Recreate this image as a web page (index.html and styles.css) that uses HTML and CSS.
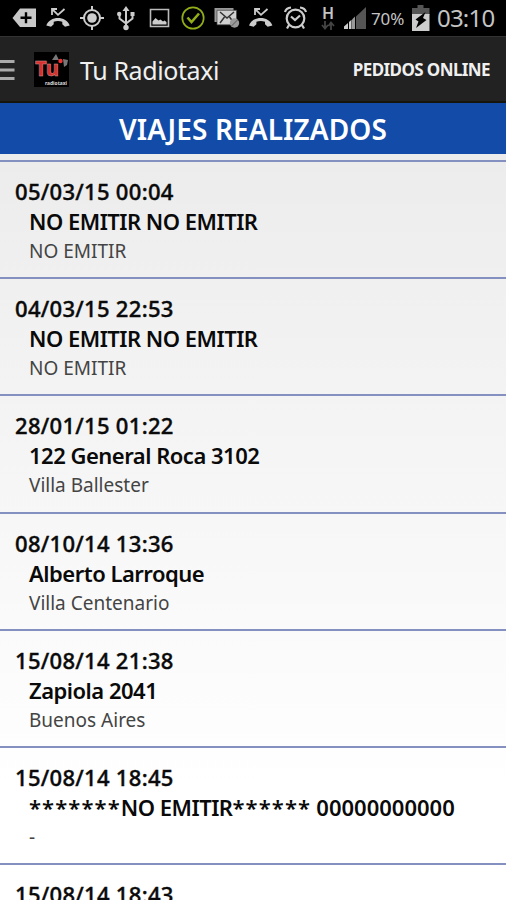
FILE: index.html
```html
<!DOCTYPE html>
<html lang="es">
<head>
    <meta charset="UTF-8">
    <meta name="viewport" content="width=device-width, initial-scale=1.0">
    <title>Tu Radiotaxi - Viajes realizados</title>
    <link rel="stylesheet" href="styles.css">
</head>
<body>
    <div class="status-bar">
        <div class="status-icons">
            <svg class="icon" viewBox="0 0 24 24"><path fill="#c8c8c8" d="M8 2.500h16v18.500H8L.5 12z"/><path stroke="#000" stroke-width="2.400" d="M8.500 11.800h11M14 6.300v11"/></svg>
            <svg class="icon" viewBox="0 0 24 24"><path fill="#ccc" d="M.3 19.500C2 14.500 7 12 12 12s10 2.500 11.700 7.500l-4.700 1.300-2.700-2.600v-2.400q-4.300-1.400-8.600 0v2.400L5 20.800z"/><path fill="none" stroke="#ccc" stroke-width="1.800" d="M6 9V3h5M6 3l6 5.800L18.500 3"/></svg>
            <svg class="icon" viewBox="0 0 24 24" fill="none" stroke="#ccc"><circle cx="12" cy="12" r="8" stroke-width="2"/><circle cx="12" cy="12" r="4.800" fill="#ccc" stroke="none"/><path stroke-width="2" d="M12 0v5M12 19v5M0 12h5M19 12h5"/></svg>
            <svg class="icon" viewBox="0 0 24 24"><path fill="none" stroke="#ccc" stroke-width="2" d="M12 3v18M5.500 8v4.500l6.500 5 6.500-5V8"/><path fill="#ccc" d="M12 0l3.500 5h-7z"/><circle cx="5.200" cy="8" r="2.200" fill="#ccc"/><path fill="#ccc" d="M16.500 6h4v4h-4z"/><circle cx="12" cy="21.500" r="2.700" fill="#ccc"/></svg>
            <svg class="icon" viewBox="0 0 24 24"><path fill="none" stroke="#bbb" stroke-width="1.600" d="M2.500 3.500h18v17h-18z"/><path fill="#ccc" d="M4.500 18.500v-3l3-3.500 3 2.500 2-1 2.500 2 1.500-1 2 1.500v2.500z"/></svg>
            <svg class="icon" viewBox="0 0 24 24" fill="none" stroke="#91ad18"><circle cx="11" cy="12" r="10.700" stroke-width="1.700"/><path stroke-width="2.600" d="M5.500 11.500l4 4.500 7.500-8.500"/></svg>
            <svg class="icon" viewBox="0 0 24 24"><path fill="#999" d="M-1.500 2h19v14h-19z"/><path fill="#d0d0d0" stroke="#444" stroke-width=".7" d="M1 4.300h19.500v14.500H1z"/><path fill="none" stroke="#333" stroke-width="1.500" d="M4 6l7 6 7-6M4 17l4.500-6M18 17l-4.500-6"/><circle cx="18.500" cy="17" r="4.700" fill="#999"/><path fill="none" stroke="#555" d="M15.500 20l6-6"/></svg>
            <svg class="icon" viewBox="0 0 24 24"><path fill="#ccc" d="M-1 19.500C.7 14.500 5.700 12 10.700 12s10 2.500 11.700 7.500l-4.700 1.300-2.700-2.600v-2.400q-4.300-1.400-8.600 0v2.400l-2.700 2.600z"/><path fill="none" stroke="#ccc" stroke-width="1.800" d="M5 9V3h5M5 3l6 5.800L17.500 3"/></svg>
            <svg class="icon" viewBox="0 0 24 24" fill="none" stroke="#ccc"><circle cx="11.500" cy="12.500" r="8.800" stroke-width="2.200"/><path stroke-width="2.200" d="M7 10.500l4 3.500 5-4.500M1 6q1-4 6-4.500M22 6q-1-4-6-4.500M5 19l-2 3.500M18 19l2 3.500"/></svg>
        </div>
        <div class="status-info">
            <div class="network">
                <span class="network-type">H</span>
                <svg class="network-arrows" viewBox="0 0 14 9"><path fill="none" stroke="#444" stroke-width="1.800" d="M4 0v7M1 4l3 3.500L7 4M10 9V2M7.500 5L10 1.500 13 5"/></svg>
            </div>
            <svg class="signal" viewBox="0 0 24 24"><path fill="#555" d="M13 10.500L23 1v22H13z"/><path fill="#ccc" d="M1 23v-2.500l4-3.500v6zM6 23v-7l2.500-2.300V23z"/><path fill="#999" d="M9 23v-9.500l3-3V23z"/></svg>
            <span class="battery-level">70%</span>
            <svg class="battery" viewBox="0 0 20 27"><path fill="#555" d="M6.500 0h6v3h6v7H1V3h5.500z"/><path fill="#ccc" d="M1 9h17.500v17H1z"/><path fill="#000" d="M14.500 7L4.500 14.500l3 2L5 23l10.500-8-3.500-2z"/></svg>
            <span class="clock">03:10</span>
        </div>
    </div>

    <header class="app-bar">
        <svg class="menu-icon" viewBox="0 0 15 24"><path fill="#aaa" d="M0 2h14.500v3H0zM0 10.500h14.500v3H0zM0 19h14.500v3H0z"/></svg>
        <svg class="app-logo" viewBox="0 0 35 35">
            <path fill="#000" d="M0 0h35v35H0z"/>
            <text class="logo-letters" x="1" y="24" textLength="24" lengthAdjust="spacingAndGlyphs">Tu</text>
            <path fill="#777" d="M18 8l4-6 3 6zM29 7l5 1-1 5-3 2z"/>
            <circle cx="26.500" cy="9" r="2.200" fill="#e33"/>
            <text class="logo-caption" x="11" y="33" textLength="22" lengthAdjust="spacingAndGlyphs">radiotaxi</text>
        </svg>
        <h1 class="app-title">Tu Radiotaxi</h1>
        <a class="app-action" href="#">PEDIDOS ONLINE</a>
    </header>

    <h2 class="section-title">VIAJES REALIZADOS</h2>

    <ul class="trip-list">
        <li class="trip">
            <div class="trip-date">05/03/15 00:04</div>
            <div class="trip-address">NO EMITIR NO EMITIR</div>
            <div class="trip-city">NO EMITIR</div>
        </li>
        <li class="trip">
            <div class="trip-date">04/03/15 22:53</div>
            <div class="trip-address">NO EMITIR NO EMITIR</div>
            <div class="trip-city">NO EMITIR</div>
        </li>
        <li class="trip">
            <div class="trip-date">28/01/15 01:22</div>
            <div class="trip-address">122 General Roca 3102</div>
            <div class="trip-city">Villa Ballester</div>
        </li>
        <li class="trip">
            <div class="trip-date">08/10/14 13:36</div>
            <div class="trip-address">Alberto Larroque</div>
            <div class="trip-city">Villa Centenario</div>
        </li>
        <li class="trip">
            <div class="trip-date">15/08/14 21:38</div>
            <div class="trip-address">Zapiola 2041</div>
            <div class="trip-city">Buenos Aires</div>
        </li>
        <li class="trip">
            <div class="trip-date">15/08/14 18:45</div>
            <div class="trip-address"><span class="stars">*******</span>NO EMITIR<span class="stars">******</span> <span class="digits">00000000000</span></div>
            <div class="trip-city">-</div>
        </li>
        <li class="trip">
            <div class="trip-date">15/08/14 18:43</div>
        </li>
    </ul>
</body>
</html>
```

FILE: styles.css
```css
* {
    box-sizing: border-box;
}

body {
    font-family: 'Noto Sans', 'Open Sans', sans-serif;
    margin: 0;
    height: 900px;
    display: flex;
    flex-direction: column;
    overflow: hidden;
    background-color: #fff;
    color: #0a0a0a;
}

/* Status bar */
.status-bar {
    flex: none;
    height: 36px;
    display: flex;
    justify-content: space-between;
    padding: 0 12px;
    background-color: #000;
    color: #c4c4c4;
}

.status-icons {
    display: flex;
    align-items: center;
    gap: 10px;
}

.icon {
    width: 24px;
    height: 24px;
    overflow: visible;
}

.status-info {
    display: flex;
    align-items: center;
}

.network {
    display: flex;
    flex-direction: column;
    align-items: center;
    width: 14px;
    margin-right: 8px;
}

.network-type {
    font-size: 16px;
    font-weight: 600;
    line-height: 15px;
}

.network-arrows {
    width: 14px;
    height: 9px;
}

.signal {
    width: 24px;
    height: 24px;
    margin-right: 4px;
}

.battery-level {
    font-size: 17px;
    letter-spacing: -0.1px;
    width: 40px;
}

.battery {
    width: 20px;
    height: 27px;
    margin-right: 6px;
}

.clock {
    font-size: 24px;
    letter-spacing: -0.8px;
    width: 57px;
    line-height: 36px;
}

/* App bar */
.app-bar {
    flex: none;
    height: 67px;
    display: flex;
    align-items: center;
    padding-right: 16px;
    background-color: #222;
    border-top: 1px solid #333;
    border-bottom: 2px solid #17140c;
    color: #f0f0f0;
}

.menu-icon {
    width: 15px;
    height: 24px;
    margin-right: 19px;
    position: relative;
    top: 1px;
}

.app-logo {
    width: 35px;
    height: 35px;
    margin-right: 11px;
}

.logo-letters {
    font-size: 22px;
    font-weight: 800;
    fill: #d8302c;
    stroke: #c99;
    stroke-width: 0.5px;
}

.logo-caption {
    font-size: 6px;
    font-weight: 700;
    fill: #ddd;
}

.app-title {
    flex: 1;
    margin: 0;
    padding-top: 2px;
    font-size: 25px;
    font-weight: 400;
    letter-spacing: -0.4px;
    white-space: nowrap;
}

.app-action {
    padding-top: 1px;
    font-size: 17px;
    font-weight: 700;
    letter-spacing: -0.6px;
    color: inherit;
    text-decoration: none;
    white-space: nowrap;
}

/* Section heading */
.section-title {
    flex: none;
    height: 51px;
    margin: 0;
    background-color: #124ca8;
    color: #fff;
    font-size: 28px;
    font-weight: 600;
    letter-spacing: 0.1px;
    line-height: 53px;
    text-align: center;
}

/* Trips */
.trip-list {
    flex: 1;
    margin: 0;
    padding: 6px 0 0;
    list-style: none;
    overflow: hidden;
    background-image: linear-gradient(#ececec, #fff 85%);
}

.trip {
    height: 117.2px;
    padding: 14px 15px 0;
    border-top: 2px solid #8491c0;
    white-space: nowrap;
}

.trip-date,
.trip-address {
    font-size: 22px;
    line-height: 30px;
}

.trip-date {
    font-weight: 500;
    letter-spacing: 0.3px;
    -webkit-text-stroke: 0.4px #0a0a0a;
}

.trip-address {
    padding-left: 14px;
    font-weight: 600;
    letter-spacing: -0.5px;
}

.trip-address .stars {
    letter-spacing: 1.1px;
}

.trip-address .digits {
    letter-spacing: 0;
}

.trip-city {
    padding-left: 14px;
    font-size: 19px;
    line-height: 30px;
    color: #444;
}
```
